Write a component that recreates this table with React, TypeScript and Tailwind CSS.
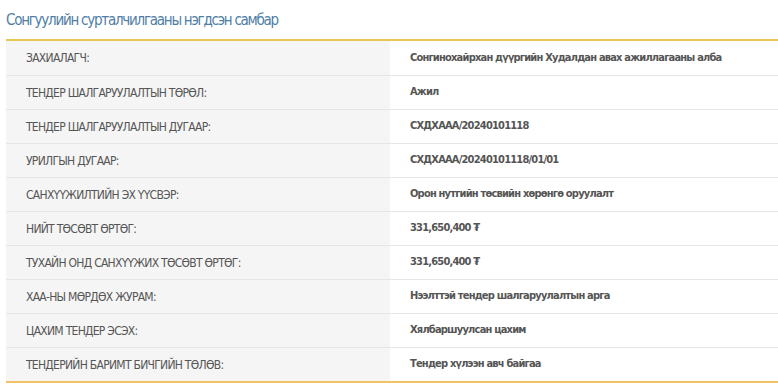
const rows: { label: string; value: string }[] = [
  { label: "ЗАХИАЛАГЧ:", value: "Сонгинохайрхан дүүргийн Худалдан авах ажиллагааны алба" },
  { label: "ТЕНДЕР ШАЛГАРУУЛАЛТЫН ТӨРӨЛ:", value: "Ажил" },
  { label: "ТЕНДЕР ШАЛГАРУУЛАЛТЫН ДУГААР:", value: "СХДХААА/20240101118" },
  { label: "УРИЛГЫН ДУГААР:", value: "СХДХААА/20240101118/01/01" },
  { label: "САНХҮҮЖИЛТИЙН ЭХ ҮҮСВЭР:", value: "Орон нутгийн төсвийн хөрөнгө оруулалт" },
  { label: "НИЙТ ТӨСӨВТ ӨРТӨГ:", value: "331,650,400 ₮" },
  { label: "ТУХАЙН ОНД САНХҮҮЖИХ ТӨСӨВТ ӨРТӨГ:", value: "331,650,400 ₮" },
  { label: "ХАА-НЫ МӨРДӨХ ЖУРАМ:", value: "Нээлттэй тендер шалгаруулалтын арга" },
  { label: "ЦАХИМ ТЕНДЕР ЭСЭХ:", value: "Хялбаршуулсан цахим" },
  { label: "ТЕНДЕРИЙН БАРИМТ БИЧГИЙН ТӨЛӨВ:", value: "Тендер хүлээн авч байгаа" },
];

const App = () => {
  return (
    <div className="w-[778px] h-[388px] bg-white overflow-hidden font-['DejaVu_Sans_Condensed','Liberation_Sans',sans-serif]">
      <h2 className="pl-[6px] pt-[10px] h-[39px] text-[15px] leading-[20px] tracking-[-1.25px] text-[#4f7ea6]">
        Сонгуулийн сурталчилгааны нэгдсэн самбар
      </h2>
      <div className="ml-[6px] border-t-2 border-b-2 border-t-[#e6c655] border-b-[#f0c464]">
        {rows.map((row, i) => (
          <div
            key={row.label}
            className={`flex h-[34px] ${i > 0 ? "border-t border-[#e6e6e6]" : ""}`}
          >
            <div className="w-[384px] shrink-0 bg-[#f5f5f5] pl-[20px] flex items-center text-[12px] tracking-[-0.72px] text-[#555]">
              {row.label}
            </div>
            <div className="flex-1 pl-[20px] flex items-center text-[11px] tracking-[-0.8px] font-bold text-[#555] whitespace-nowrap">
              {row.value}
            </div>
          </div>
        ))}
      </div>
    </div>
  );
};

export default App;
